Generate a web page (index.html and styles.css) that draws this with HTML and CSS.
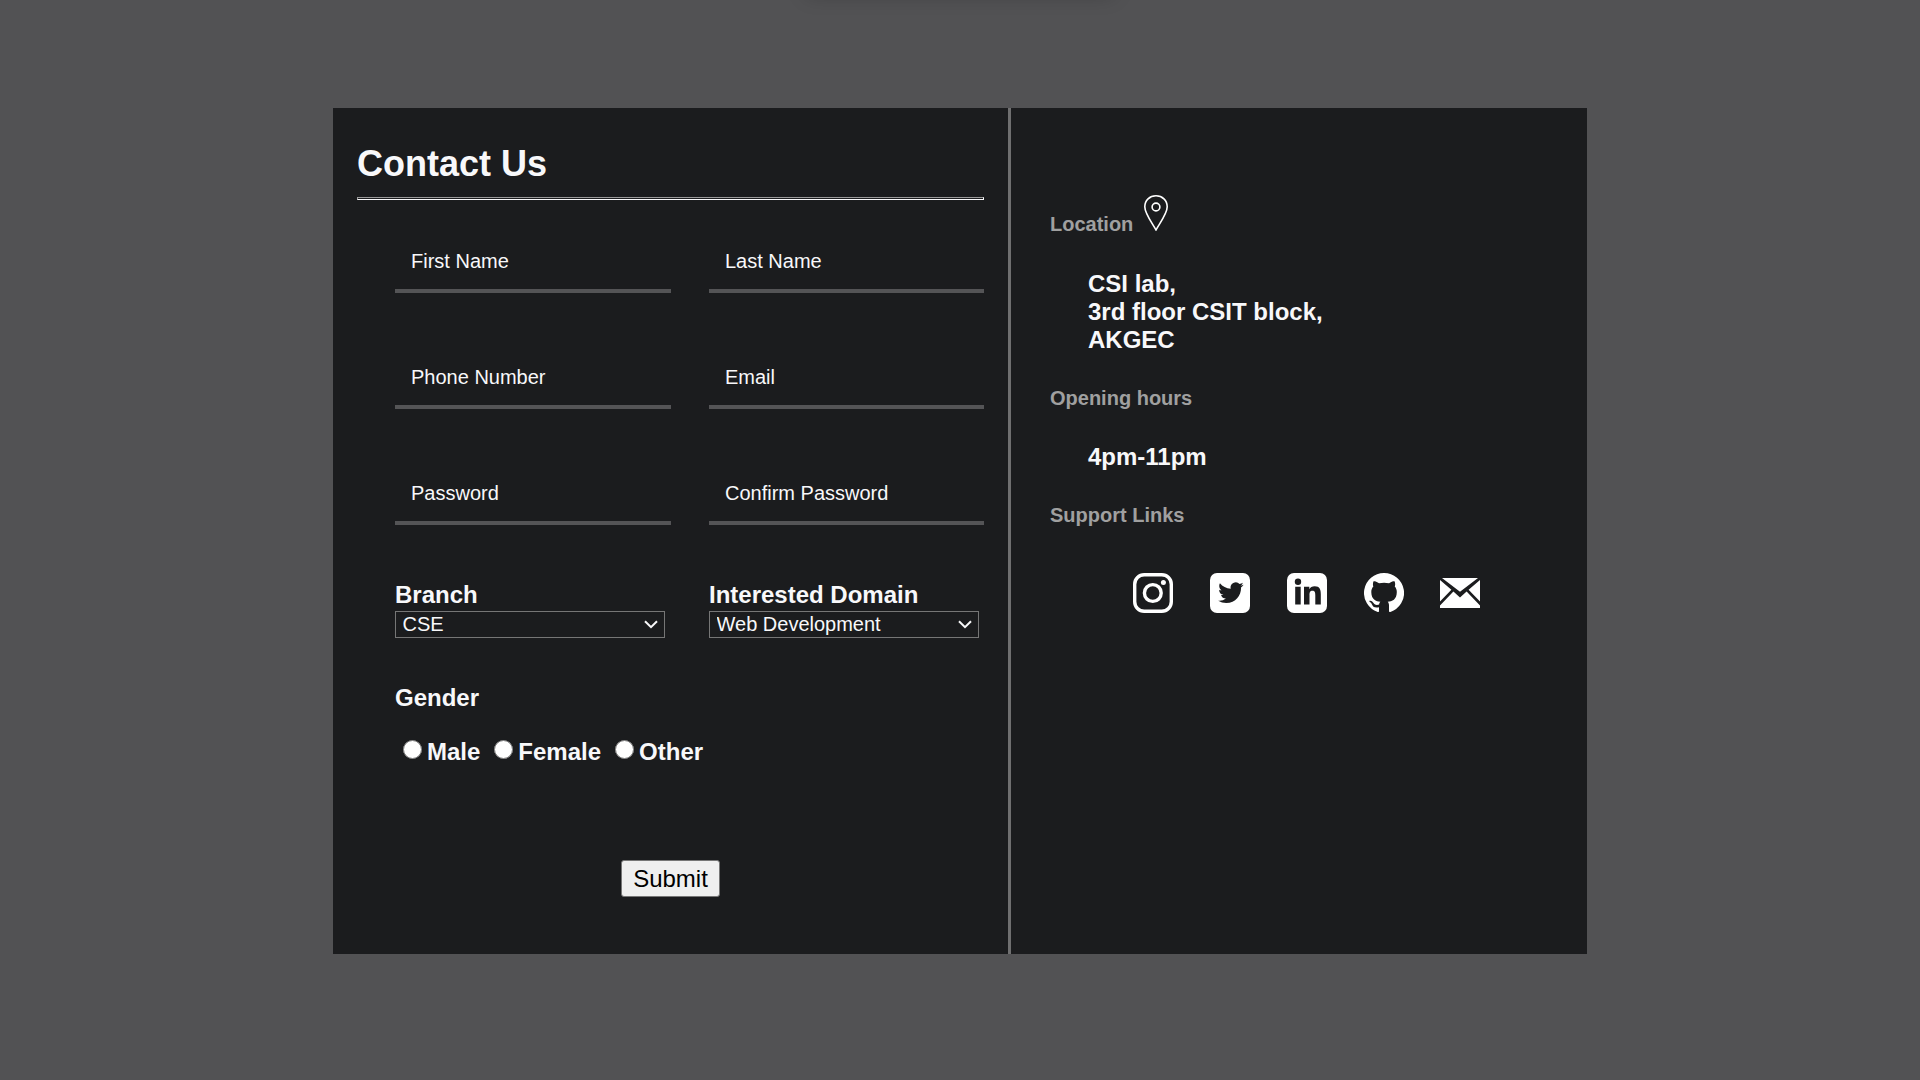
FILE: index.html
```html
<!DOCTYPE html>
<html lang="en">
<head>
<meta charset="utf-8">
<title>Contact Us</title>
<link rel="stylesheet" href="styles.css">
</head>
<body>
<main class="card">
  <section class="form-panel">
    <h1 class="title">Contact Us</h1>
    <hr class="rule">
    <form class="form">
      <div class="fields">
        <input class="field" type="text" placeholder="First Name">
        <input class="field" type="text" placeholder="Last Name">
        <input class="field" type="tel" placeholder="Phone Number">
        <input class="field" type="email" placeholder="Email">
        <input class="field" type="password" placeholder="Password">
        <input class="field" type="password" placeholder="Confirm Password">
      </div>
      <div class="choices">
        <div class="choice">
          <label class="label" for="branch">Branch</label>
          <div class="select-box">
            <select class="select" id="branch"><option>CSE</option><option>IT</option><option>ECE</option></select>
            <svg class="chevron" viewBox="0 0 14 9"><path d="M1 1.2l6 6 6-6"/></svg>
          </div>
        </div>
        <div class="choice">
          <label class="label" for="domain">Interested Domain</label>
          <div class="select-box">
            <select class="select" id="domain"><option>Web Development</option><option>App Development</option></select>
            <svg class="chevron" viewBox="0 0 14 9"><path d="M1 1.2l6 6 6-6"/></svg>
          </div>
        </div>
      </div>
      <div class="label gender-label">Gender</div>
      <div class="genders">
        <label class="gender"><input class="radio" type="radio" name="gender">Male</label>
        <label class="gender"><input class="radio" type="radio" name="gender">Female</label>
        <label class="gender"><input class="radio" type="radio" name="gender">Other</label>
      </div>
    </form>
    <button class="submit" type="button">Submit</button>
  </section>
  <aside class="info-panel">
    <h2 class="heading location">Location
      <svg class="pin" viewBox="0 0 24 36" fill="none" stroke="#fff" stroke-width="1.6"><path d="M12 35 C9 29 .8 19 .8 11.8 C.8 5.4 5.7.8 12 .8 S23.2 5.4 23.2 11.8 C23.2 19 15 29 12 35Z"/><circle cx="12" cy="12" r="3.9"/></svg>
    </h2>
    <p class="detail">CSI lab,<br>3rd floor CSIT block,<br>AKGEC</p>
    <h2 class="heading">Opening hours</h2>
    <p class="detail">4pm-11pm</p>
    <h2 class="heading">Support Links</h2>
    <nav class="links">
      <svg class="icon" viewBox="0 0 40 40"><rect x="1.7" y="1.7" width="36.6" height="36.6" rx="9.5" fill="none" stroke="#fff" stroke-width="3.4"/><circle cx="19.8" cy="20" r="8.4" fill="none" stroke="#fff" stroke-width="3.4"/><circle cx="30.4" cy="9.6" r="2.5" fill="#fff"/></svg>
      <svg class="icon" viewBox="0 0 40 40"><rect width="40" height="40" rx="7" fill="#fff"/><path class="cut" transform="translate(8.2 7) scale(1.06)" d="M23.95 4.57a10 10 0 0 1-2.82.77 4.96 4.96 0 0 0 2.16-2.72c-.95.55-2 .95-3.13 1.18a4.92 4.92 0 0 0-8.38 4.48C7.69 8.1 4.07 6.13 1.64 3.16a4.82 4.82 0 0 0-.67 2.48c0 1.71.87 3.21 2.19 4.1a4.9 4.9 0 0 1-2.23-.62v.06a4.92 4.92 0 0 0 3.95 4.83 5 5 0 0 1-2.21.08 4.94 4.94 0 0 0 4.6 3.42A9.87 9.87 0 0 1 0 19.54a14 14 0 0 0 7.55 2.21c9.05 0 14-7.5 14-13.98 0-.21 0-.42-.02-.63a9.94 9.94 0 0 0 2.42-2.57z"/></svg>
      <svg class="icon" viewBox="0 0 40 40"><rect width="40" height="40" rx="7" fill="#fff"/><g class="cut"><circle cx="11" cy="8.8" r="3.2"/><path d="M8.2 13.8h5.5v17.7H8.2zM17 13.8h5.3v2.5c.9-1.7 2.8-3 5.4-3 5.1 0 6.1 3.4 6.1 8v10.2h-5.5v-9.2c0-2.2-.1-4.6-2.8-4.6s-3 2.1-3 4.4v9.4H17z"/></g></svg>
      <svg class="icon" viewBox="0 0 16 16"><path fill="#fff" d="M8 0a8 8 0 0 0-2.53 15.59c.4.07.55-.17.55-.38 0-.19-.01-.82-.01-1.49-2.01.37-2.53-.49-2.69-.94-.09-.23-.48-.94-.82-1.13-.28-.15-.68-.52-.01-.53.63-.01 1.08.58 1.23.82.72 1.21 1.87.87 2.33.66.07-.52.28-.87.51-1.07-1.78-.2-3.64-.89-3.64-3.95 0-.87.31-1.59.82-2.15-.08-.2-.36-1.02.08-2.12 0 0 .67-.21 2.2.82a7.6 7.6 0 0 1 4 0c1.53-1.04 2.2-.82 2.2-.82.44 1.1.16 1.92.08 2.12.51.56.82 1.27.82 2.15 0 3.07-1.87 3.75-3.65 3.95.29.25.54.73.54 1.48 0 1.07-.01 1.93-.01 2.2 0 .21.15.46.55.38A8 8 0 0 0 8 0z"/></svg>
      <svg class="icon mail" viewBox="0 0 40 40" fill="#fff"><path d="M2 5h36L20 18.8zM0 7l11.4 9.8L0 28.6zM40 7v21.6L28.6 16.8zM13.4 18.6l6.6 5.8 6.6-5.8L40 32.4V35H0v-2.6z"/></svg>
    </nav>
  </aside>
</main>
</body>
</html>
```
FILE: styles.css
```css
* { box-sizing: border-box; }

body {
  margin: 0;
  height: 100vh;
  padding-top: 108px;
  overflow: hidden;
  background: #525254;
  color: #f8f8fa;
  font-family: "Liberation Sans", Arial, sans-serif;
}

/* soft shadow along the top edge of the window */
body::before {
  content: "";
  position: absolute;
  top: -22px;
  left: 806px;
  width: 308px;
  height: 18px;
  box-shadow: 0 0 20px rgba(0, 0, 0, .2);
}

.card {
  display: flex;
  width: 1254px;
  height: 846px;
  margin: 0 auto;
  background: #1b1c1e;
}

.form-panel {
  display: flex;
  flex-direction: column;
  width: 678px;
  padding: 35px 24px 0;
  border-right: 3px solid #6f6f70;
}

.title { margin: 0; font-size: 36px; line-height: 41px; }

.rule {
  width: 100%;
  height: 3px;
  margin: 13px 0 0;
  border: 1px solid;
  border-color: #9a9a9a #f8f8fa #f8f8fa #9a9a9a;
}

.form { margin: 29px 0 0 38px; }

.fields, .choices {
  display: grid;
  grid-template-columns: 276px 275px;
  column-gap: 38px;
  row-gap: 52px;
}

.field {
  width: 100%;
  height: 64px;
  padding: 4px 16px 0;
  border: 0;
  border-bottom: 4px solid #545456;
  border-radius: 0;
  background: transparent;
  color: #f8f8fa;
  font: 20px "Liberation Sans", Arial, sans-serif;
}

.field::placeholder { color: #f8f8fa; opacity: 1; }

.choices { margin-top: 56px; }
.choice { display: flex; flex-direction: column; gap: 2px; }
.label { font-size: 24px; font-weight: bold; line-height: 28px; }

.select-box {
  display: grid;
  align-items: center;
  width: 270px;
  height: 27px;
}

.select {
  grid-area: 1 / 1;
  width: 100%;
  height: 27px;
  padding: 0 24px 2px 6.5px;
  border: 1px solid #767676;
  border-radius: 0;
  appearance: none;
  background-color: #1b1c1e;
  color: #f8f8fa;
  font: 20px "Liberation Sans", Arial, sans-serif;
}

.chevron {
  grid-area: 1 / 1;
  justify-self: end;
  width: 14px;
  height: 9px;
  margin-right: 7px;
  fill: none;
  stroke: #f8f8fa;
  stroke-width: 2;
  pointer-events: none;
}

.gender-label { margin-top: 46px; }

.genders {
  display: flex;
  gap: 14px;
  margin: 26px 0 0 8px;
  font-size: 24px;
  font-weight: bold;
  line-height: 28px;
}

.gender { display: flex; align-items: flex-start; gap: 5px; }
.radio { width: 19px; height: 19px; margin: 2px 0 0; }

.submit {
  align-self: center;
  width: 99px;
  height: 37px;
  margin-top: 94px;
  padding: 0;
  border: 1px solid #767676;
  border-radius: 3px;
  background: #efefef;
  color: #000;
  font: 24px "Liberation Sans", Arial, sans-serif;
}

.info-panel { flex: 1; padding: 87px 0 0 39px; }

.heading { margin: 0; color: #a0a0a0; font-size: 20px; line-height: 22px; }
.location { display: flex; align-items: flex-end; gap: 11px; height: 41px; padding-bottom: 1px; }
.pin { width: 24px; height: 36px; margin-bottom: 4px; }

.detail {
  margin: 34px 0 33px 38px;
  font-size: 24px;
  font-weight: bold;
  line-height: 28px;
}

.links { display: flex; gap: 37px; margin: 47px 0 0 83px; }
.icon { width: 40px; height: 40px; }
.mail { margin-left: -1px; }
.cut { fill: #1b1c1e; }
```
